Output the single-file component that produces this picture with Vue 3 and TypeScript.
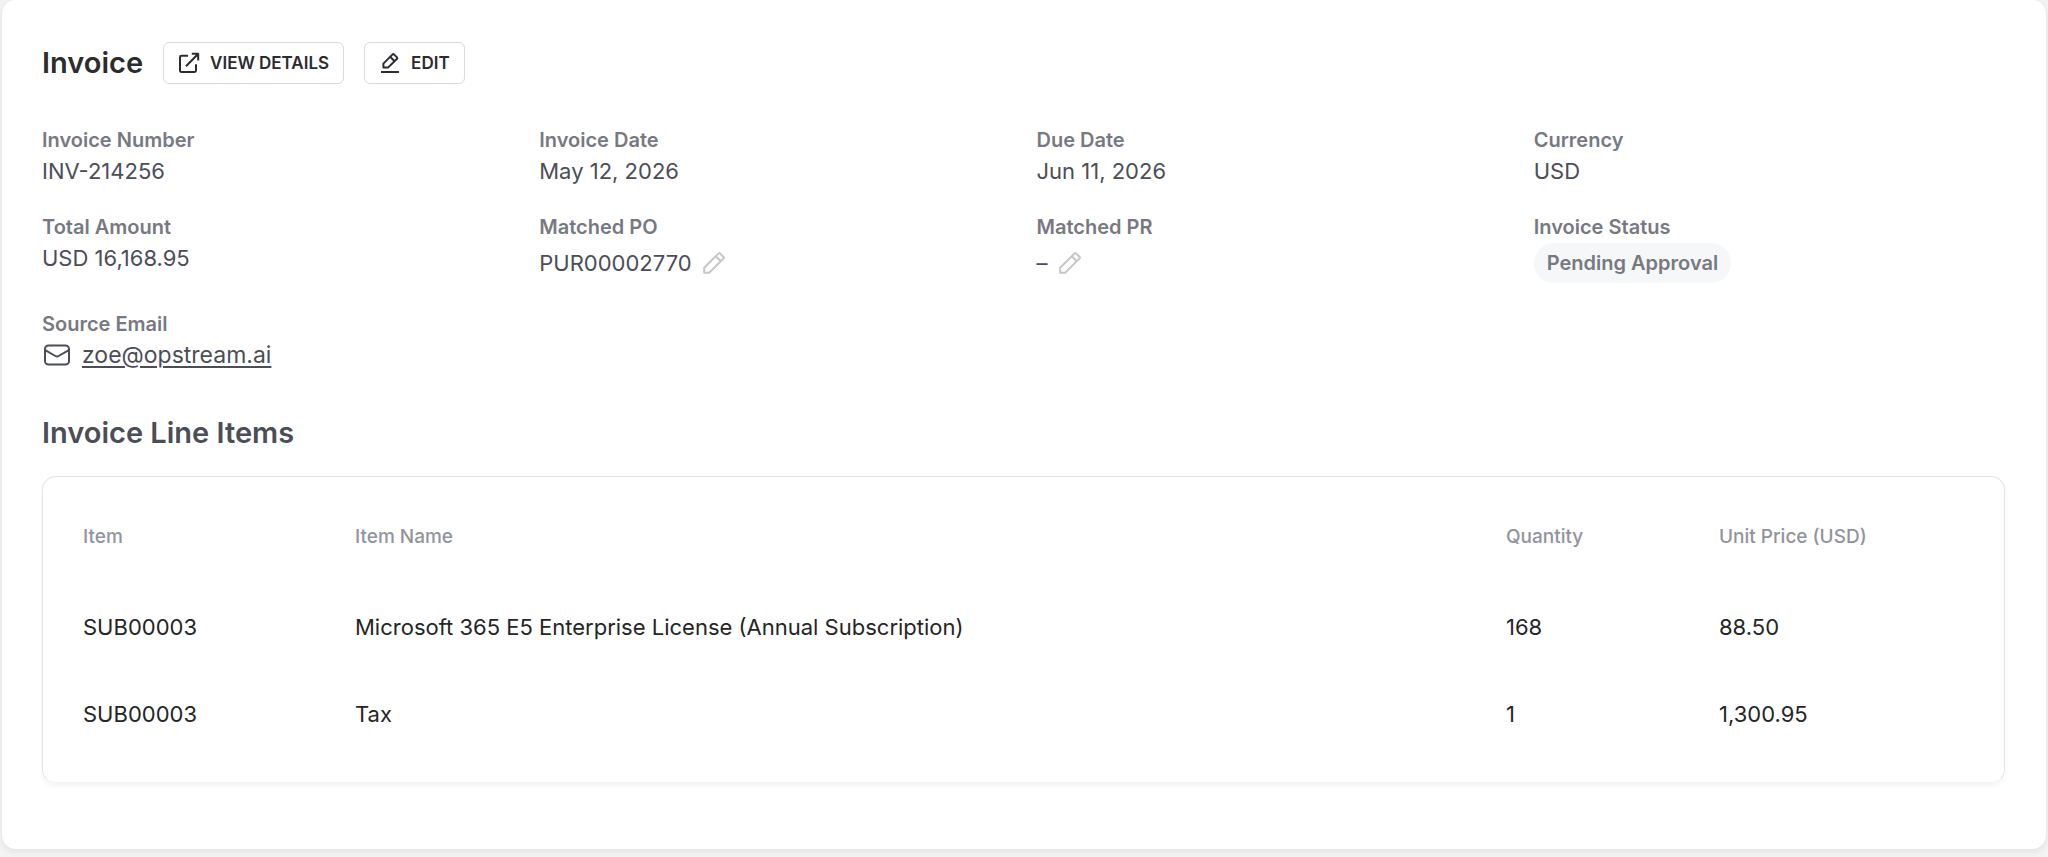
<script setup lang="ts">
interface LineItem {
  item: string
  name: string
  quantity: string
  unitPrice: string
}

const lineItems: LineItem[] = [
  {
    item: 'SUB00003',
    name: 'Microsoft 365 E5 Enterprise License (Annual Subscription)',
    quantity: '168',
    unitPrice: '88.50',
  },
  { item: 'SUB00003', name: 'Tax', quantity: '1', unitPrice: '1,300.95' },
]
</script>

<template>
  <main class="card">
    <header class="head">
      <h1 class="title">Invoice</h1>
      <div class="actions">
        <button type="button" class="action">
          <svg class="action-icon" viewBox="0 0 22 22" aria-hidden="true">
            <path d="M10 3.8H3.4a1.4 1.4 0 0 0-1.4 1.4v13.4A1.4 1.4 0 0 0 3.4 20h13.2a1.4 1.4 0 0 0 1.4-1.4v-6.4M8 14.2 20 2M13.8 1.8H20.2V8.4" />
          </svg>
          VIEW DETAILS
        </button>
        <button type="button" class="action">
          <svg class="action-icon" viewBox="0 0 22 22" aria-hidden="true">
            <path d="M2 20h18M4.4 15.6v-4L13.6 2.4a1 1 0 0 1 1.4 0l3 3a1 1 0 0 1 0 1.4L9 15.6ZM11.2 4.8l4.4 4.4" />
          </svg>
          EDIT
        </button>
      </div>
    </header>

    <dl class="fields">
      <div><dt>Invoice Number</dt><dd>INV-214256</dd></div>
      <div><dt>Invoice Date</dt><dd>May 12, 2026</dd></div>
      <div><dt>Due Date</dt><dd>Jun 11, 2026</dd></div>
      <div><dt>Currency</dt><dd>USD</dd></div>
      <div><dt>Total Amount</dt><dd>USD 16,168.95</dd></div>
      <div>
        <dt>Matched PO</dt>
        <dd class="tall">
          PUR00002770
          <button type="button" class="pencil" aria-label="Edit matched PO">
            <svg viewBox="0 0 24 24" aria-hidden="true">
              <path d="M2.2 21.8v-5L16.6 2.4a1 1 0 0 1 1.4 0l3.6 3.6a1 1 0 0 1 0 1.4L7.2 21.8ZM13.8 5.2l5 5" />
            </svg>
          </button>
        </dd>
      </div>
      <div>
        <dt>Matched PR</dt>
        <dd class="tall">
          –
          <button type="button" class="pencil" aria-label="Edit matched PR">
            <svg viewBox="0 0 24 24" aria-hidden="true">
              <path d="M2.2 21.8v-5L16.6 2.4a1 1 0 0 1 1.4 0l3.6 3.6a1 1 0 0 1 0 1.4L7.2 21.8ZM13.8 5.2l5 5" />
            </svg>
          </button>
        </dd>
      </div>
      <div>
        <dt>Invoice Status</dt>
        <dd class="tall"><span class="status">Pending Approval</span></dd>
      </div>
      <div>
        <dt>Source Email</dt>
        <dd class="email">
          <svg class="mail" viewBox="0 0 30 24" aria-hidden="true">
            <rect x="3" y="2.5" width="24" height="19" rx="3.5" />
            <path d="m3.6 7.4 9.8 5.6a3 3 0 0 0 3.2 0l9.8-5.6" />
          </svg>
          <a href="mailto:zoe@opstream.ai">zoe@opstream.ai</a>
        </dd>
      </div>
    </dl>

    <h2 class="section">Invoice Line Items</h2>
    <section class="panel">
      <table>
        <colgroup>
          <col class="c-item" />
          <col />
          <col class="c-qty" />
          <col class="c-price" />
        </colgroup>
        <thead>
          <tr>
            <th scope="col">Item</th>
            <th scope="col">Item Name</th>
            <th scope="col">Quantity</th>
            <th scope="col">Unit Price (USD)</th>
          </tr>
        </thead>
        <tbody>
          <tr v-for="line in lineItems" :key="line.name">
            <td>{{ line.item }}</td>
            <td>{{ line.name }}</td>
            <td>{{ line.quantity }}</td>
            <td>{{ line.unitPrice }}</td>
          </tr>
        </tbody>
      </table>
    </section>
  </main>
</template>

<style>
body {
  background: #f3f3f4;
}
</style>

<style scoped>
.card {
  box-sizing: border-box;
  margin: 0 2px 7px;
  padding: 42px 41px 66px 40px;
  border-radius: 14px;
  background: #fff;
  box-shadow: 0 2px 6px rgba(0, 0, 0, 0.08);
  font-family: Inter, "Liberation Sans", sans-serif;
  font-size: 22px;
  color: #4b4d57;
}

.head,
.actions {
  display: flex;
  align-items: center;
  gap: 20px;
}

.title,
.section {
  margin: 0;
  font-size: 29px;
  line-height: 36px;
  font-weight: 600;
}

.title {
  color: #2b2c30;
}

.action {
  display: flex;
  align-items: center;
  gap: 10px;
  height: 42px;
  padding: 0 14px;
  border: 1px solid #d9dadb;
  border-radius: 6px;
  background: #fff;
  color: #2b2c30;
  font: 600 17px Inter, "Liberation Sans", sans-serif;
}

svg {
  display: block;
  fill: none;
  stroke: currentColor;
  stroke-width: 2;
  stroke-linejoin: round;
}

.action-icon {
  width: 22px;
  height: 22px;
}

.fields {
  display: grid;
  grid-template-columns: repeat(4, 1fr);
  gap: 25px 26px;
  margin: 40px 0 45px;
}

dt {
  color: #777982;
  font-size: 20px;
  line-height: 32px;
  font-weight: 600;
}

dd {
  display: flex;
  align-items: center;
  margin: 0;
  line-height: 30px;
}

.tall {
  height: 40px;
}

.pencil {
  margin: 0 0 0 10px;
  padding: 0;
  border: 0;
  background: none;
  color: #c6c6c8;
}

.pencil svg {
  width: 24px;
  height: 24px;
}

.status {
  padding: 0 13px;
  border-radius: 20px;
  background: #f6f7f8;
  color: #777982;
  font-size: 20px;
  line-height: 40px;
  font-weight: 600;
}

.email {
  gap: 10px;
}

.mail {
  width: 30px;
  height: 24px;
}

a {
  color: inherit;
  font-size: 23px;
  text-decoration-thickness: 2px;
  text-underline-offset: 3px;
}

.panel {
  margin-top: 25px;
  padding: 13px 40px 25px;
  border: 1px solid #e3e4e6;
  border-bottom-color: #f3f3f4;
  border-radius: 14px;
  box-shadow: 0 4px 5px rgba(0, 0, 0, 0.04);
}

table {
  width: 100%;
  table-layout: fixed;
  border-collapse: collapse;
}

.c-item {
  width: 272px;
}

.c-qty {
  width: 213px;
}

.c-price {
  width: 245px;
}

th,
td {
  height: 87px;
  padding: 0;
  text-align: left;
}

th {
  height: 93px;
  color: #91939d;
  font-size: 19px;
  font-weight: 500;
}

td {
  color: #242526;
}
</style>
